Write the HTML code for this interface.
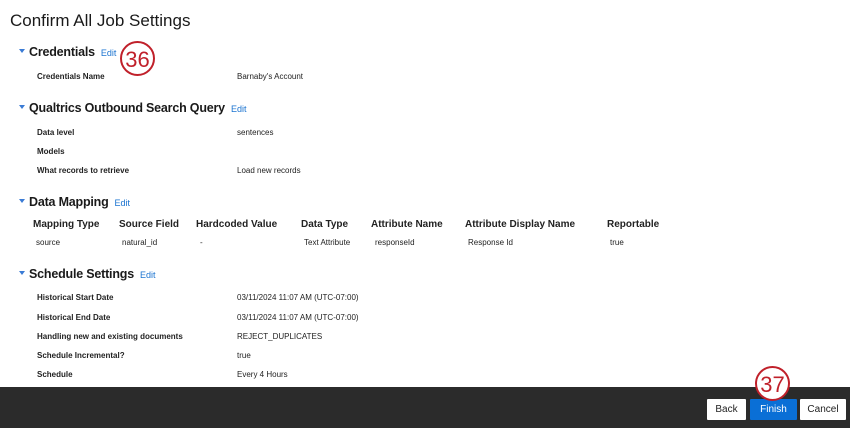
<!DOCTYPE html>
<html><head><style>
body{margin:0;width:850px;height:428px;background:#fff;font-family:"Liberation Sans",Arial,sans-serif;color:#111;position:relative;overflow:hidden}
.a{position:absolute;white-space:nowrap}
h1{position:absolute;left:10px;top:11px;margin:0;font-size:17px;font-weight:normal;color:#1a1a1a}
.h{font-size:12.5px;font-weight:bold;color:#1a1a1a;letter-spacing:-0.2px}
.e{font-size:9px;color:#1a73d0;font-weight:normal;margin-left:6px;letter-spacing:0}
.t{position:absolute;left:19px;width:0;height:0;border-left:3px solid transparent;border-right:3px solid transparent;border-top:4px solid #3a7bd5}
.l{font-size:8px;font-weight:bold;color:#222}
.v{font-size:8px;color:#222}
.th{font-size:10px;font-weight:bold;color:#222}
.c{position:absolute;border:2.5px solid #c0202a;border-radius:50%;background:#fff;color:#c0202a;font-size:22px;text-align:center;box-sizing:border-box}
.f{position:absolute;left:0;top:387px;width:850px;height:41px;background:#2b2b2b}
.b{position:absolute;top:399px;height:21px;font-size:10px;text-align:center;line-height:21px;background:#fff;color:#222;border-radius:1px}
</style></head><body>
<h1>Confirm All Job Settings</h1>
<div class="t" style="top:49px"></div>
<div class="a h" style="left:29px;top:45px">Credentials<span class="e">Edit</span></div>
<div class="c" style="left:120px;top:41px;width:35px;height:35px;line-height:33px">36</div>
<div class="a l" style="left:37px;top:72px">Credentials Name</div><div class="a v" style="left:237px;top:72px">Barnaby's Account</div>

<div class="t" style="top:105px"></div>
<div class="a h" style="left:29px;top:101px">Qualtrics Outbound Search Query<span class="e">Edit</span></div>
<div class="a l" style="left:37px;top:128px">Data level</div><div class="a v" style="left:237px;top:128px">sentences</div>
<div class="a l" style="left:37px;top:147px">Models</div>
<div class="a l" style="left:37px;top:166px">What records to retrieve</div><div class="a v" style="left:237px;top:166px">Load new records</div>

<div class="t" style="top:199px"></div>
<div class="a h" style="left:29px;top:195px">Data Mapping<span class="e">Edit</span></div>
<div class="a th" style="left:33px;top:219px">Mapping Type</div>
<div class="a th" style="left:119px;top:219px">Source Field</div>
<div class="a th" style="left:196px;top:219px">Hardcoded Value</div>
<div class="a th" style="left:301px;top:219px">Data Type</div>
<div class="a th" style="left:371px;top:219px">Attribute Name</div>
<div class="a th" style="left:465px;top:219px">Attribute Display Name</div>
<div class="a th" style="left:607px;top:219px">Reportable</div>
<div class="a v" style="left:36px;top:238px">source</div>
<div class="a v" style="left:122px;top:238px">natural_id</div>
<div class="a v" style="left:200px;top:238px">-</div>
<div class="a v" style="left:304px;top:238px">Text Attribute</div>
<div class="a v" style="left:375px;top:238px">responseId</div>
<div class="a v" style="left:468px;top:238px">Response Id</div>
<div class="a v" style="left:610px;top:238px">true</div>

<div class="t" style="top:271px"></div>
<div class="a h" style="left:29px;top:267px">Schedule Settings<span class="e">Edit</span></div>
<div class="a l" style="left:37px;top:293px">Historical Start Date</div><div class="a v" style="left:237px;top:293px">03/11/2024 11:07 AM (UTC-07:00)</div>
<div class="a l" style="left:37px;top:313px">Historical End Date</div><div class="a v" style="left:237px;top:313px">03/11/2024 11:07 AM (UTC-07:00)</div>
<div class="a l" style="left:37px;top:332px">Handling new and existing documents</div><div class="a v" style="left:237px;top:332px">REJECT_DUPLICATES</div>
<div class="a l" style="left:37px;top:351px">Schedule Incremental?</div><div class="a v" style="left:237px;top:351px">true</div>
<div class="a l" style="left:37px;top:370px">Schedule</div><div class="a v" style="left:237px;top:370px">Every 4 Hours</div>

<div class="f"></div>
<div class="b" style="left:707px;width:39px">Back</div>
<div class="b" style="left:750px;width:47px;background:#0a6fd6;color:#fff">Finish</div>
<div class="b" style="left:800px;width:46px">Cancel</div>
<div class="c" style="left:755px;top:366px;width:35px;height:35px;line-height:33px">37</div>
</body></html>
